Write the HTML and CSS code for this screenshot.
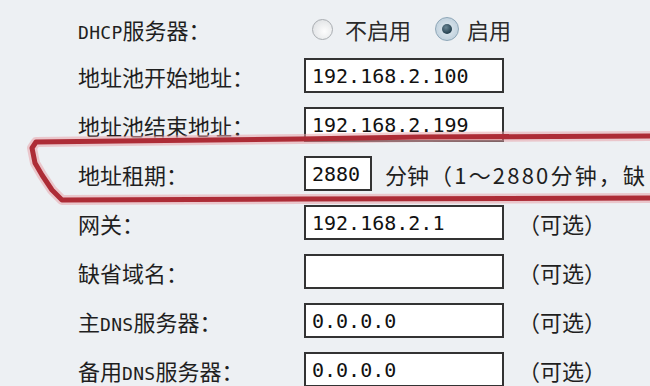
FILE: index.html
```html
<!DOCTYPE html>
<html lang="zh-CN">
  <head>
    <meta charset="UTF-8" />
    <meta name="viewport" content="width=device-width, initial-scale=1.0" />
    <title>DHCP服务</title>
    <link rel="stylesheet" href="styles.css">
  </head>
  <body>
    <div class="form">
      <div class="row first">
        <div class="label"><span class="en">DHCP</span>服务器：</div>
        <div class="field">
          <span class="radio"></span>
          <span class="opt">不启用</span>
          <span class="radio checked"></span>
          <span class="opt on">启用</span>
        </div>
      </div>
      <div class="row">
        <div class="label">地址池开始地址：</div>
        <div class="field"><input class="ip" type="text" value="192.168.2.100"></div>
      </div>
      <div class="row">
        <div class="label">地址池结束地址：</div>
        <div class="field"><input class="ip" type="text" value="192.168.2.199"></div>
      </div>
      <div class="row">
        <div class="label">地址租期：</div>
        <div class="field">
          <input class="ip short" type="text" value="2880">
          <span class="unit">分钟</span>
          <span class="hint">（1～2880分钟，缺</span>
        </div>
      </div>
      <div class="row">
        <div class="label">网关：</div>
        <div class="field"><input class="ip" type="text" value="192.168.2.1"><span class="note">（可选）</span></div>
      </div>
      <div class="row">
        <div class="label">缺省域名：</div>
        <div class="field"><input class="ip" type="text" value=""><span class="note">（可选）</span></div>
      </div>
      <div class="row">
        <div class="label">主<span class="en">DNS</span>服务器：</div>
        <div class="field"><input class="ip" type="text" value="0.0.0.0"><span class="note">（可选）</span></div>
      </div>
      <div class="row">
        <div class="label">备用<span class="en">DNS</span>服务器：</div>
        <div class="field"><input class="ip" type="text" value="0.0.0.0"><span class="note">（可选）</span></div>
      </div>
    </div>

    <!-- hand drawn marker around the lease row -->
    <svg class="marker" viewBox="0 0 650 386" width="650" height="386">
      <polyline class="glow" points="660,136 420,137 360,138 300,139 120,141 36,142 32,148 35,163 42,175 52,190 62,200 300,199 660,198" />
      <polyline class="pen" points="660,136 420,137 360,138 300,139 120,141 36,142 32,148 35,163 42,175 52,190 62,200 300,199 660,198" />
    </svg>
  </body>
</html>
```

FILE: styles.css
```css
body {
  margin: 0;
  padding: 0;
  background-color: #edf0f3;
  color: #1f1f1f;
  font-family: "Noto Sans CJK SC", "Noto Sans", sans-serif;
  font-size: 22px;
  overflow: hidden;
  height: 386px;
}
.form {
  padding: 7px 0 0 78px;
}
.row {
  display: flex;
  align-items: center;
  height: 49px;
}
.row.first {
  height: 44px;
}
.label {
  width: 226px;
  flex-shrink: 0;
  white-space: nowrap;
}
.en {
  font-family: "DejaVu Sans Mono", monospace;
  font-size: 18px;
  letter-spacing: 0.3px;
}
.field {
  display: flex;
  align-items: center;
  white-space: nowrap;
}
.ip {
  box-sizing: border-box;
  width: 200px;
  height: 35px;
  margin: 0;
  padding: 0 0 0 6px;
  border: 2px solid #333;
  background: #fff;
  color: #111;
  font-family: "DejaVu Sans Mono", monospace;
  font-size: 20px;
  outline: none;
}
.ip.short {
  width: 68px;
}
.unit {
  margin-left: 13px;
}
.hint {
  margin-left: 1px;
  letter-spacing: 2.2px;
}
.note {
  margin-left: 14px;
}
.radio {
  box-sizing: border-box;
  width: 21px;
  height: 21px;
  margin-left: 8px;
  border-radius: 50%;
  border: 1px solid #a9adb1;
  background: radial-gradient(circle at 60% 60%, #fdfdfd 0%, #e4e6e8 70%, #c9cccf 100%);
  position: relative;
}
.radio.checked {
  width: 24px;
  height: 24px;
  margin-left: 24px;
  border-color: #8ea7b8;
  background: radial-gradient(circle at 50% 50%, #e3ecf2 0%, #b5c8d6 100%);
}
.radio.checked::after {
  content: "";
  position: absolute;
  left: 6px;
  top: 6px;
  width: 10px;
  height: 10px;
  border-radius: 50%;
  background: radial-gradient(circle at 40% 35%, #6c8795 0%, #24404f 70%);
}
.opt {
  margin-left: 12px;
  color: #2a2a2a;
}
.opt.on {
  margin-left: 8px;
}
.marker {
  position: absolute;
  left: 0;
  top: 0;
  pointer-events: none;
}
.marker polyline {
  fill: none;
  stroke-linejoin: round;
  stroke-linecap: round;
}
.marker .glow {
  stroke: #e8a4aa;
  stroke-width: 10;
  opacity: 0.55;
}
.marker .pen {
  stroke: #ad2c36;
  stroke-width: 5;
}
```
